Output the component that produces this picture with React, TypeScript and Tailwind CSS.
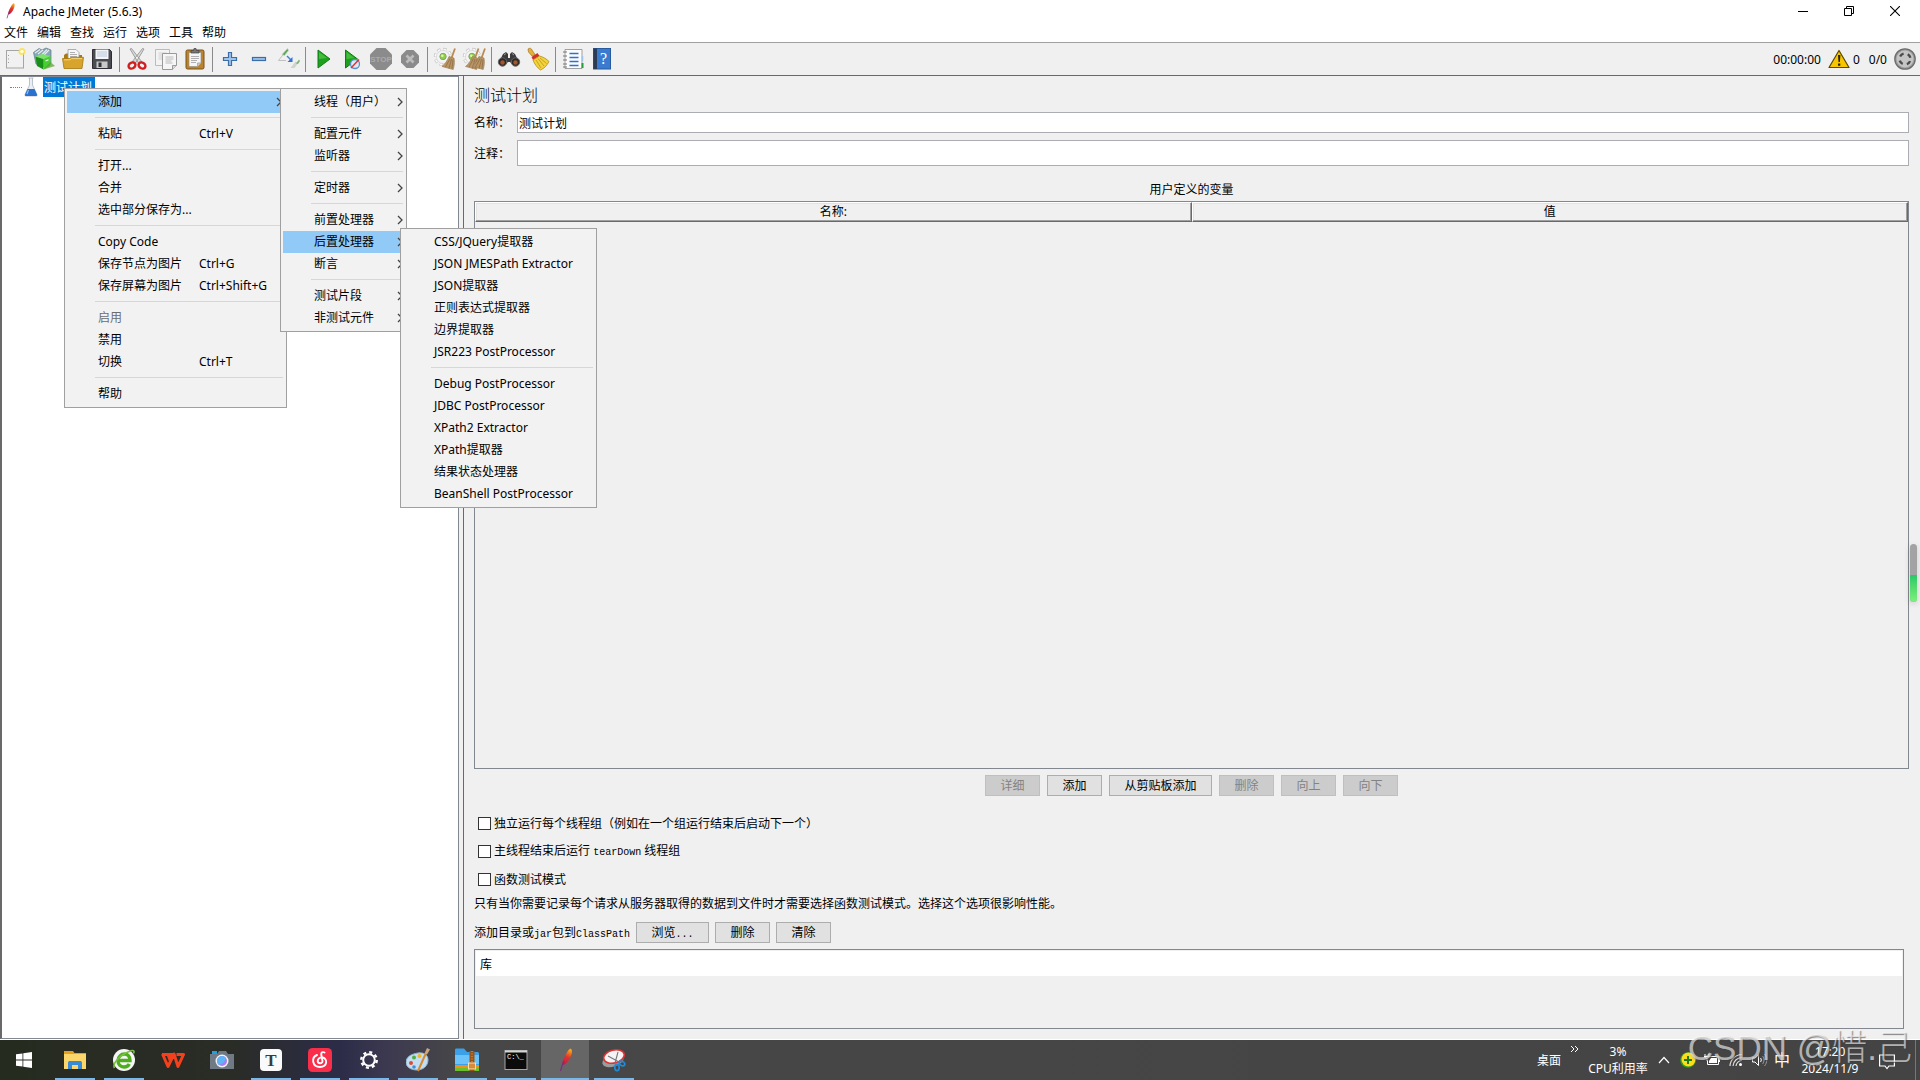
import React, { useState } from 'react';
import clsx from 'clsx';

interface MenuEntry {
  label?: string;
  shortcut?: string;
  disabled?: boolean;
  open?: boolean;
  submenu?: boolean;
  children?: MenuEntry[];
  separator?: boolean;
}

const SEP: MenuEntry = { separator: true };

const POST_PROCESSORS: MenuEntry[] = [
  { label: 'CSS/JQuery提取器' },
  { label: 'JSON JMESPath Extractor' },
  { label: 'JSON提取器' },
  { label: '正则表达式提取器' },
  { label: '边界提取器' },
  { label: 'JSR223 PostProcessor' },
  SEP,
  { label: 'Debug PostProcessor' },
  { label: 'JDBC PostProcessor' },
  { label: 'XPath2 Extractor' },
  { label: 'XPath提取器' },
  { label: '结果状态处理器' },
  { label: 'BeanShell PostProcessor' },
];

const ADD_MENU: MenuEntry[] = [
  { label: '线程（用户）', submenu: true },
  SEP,
  { label: '配置元件', submenu: true },
  { label: '监听器', submenu: true },
  SEP,
  { label: '定时器', submenu: true },
  SEP,
  { label: '前置处理器', submenu: true },
  { label: '后置处理器', submenu: true, open: true, children: POST_PROCESSORS },
  { label: '断言', submenu: true },
  SEP,
  { label: '测试片段', submenu: true },
  { label: '非测试元件', submenu: true },
];

const CONTEXT_MENU: MenuEntry[] = [
  { label: '添加', submenu: true, open: true, children: ADD_MENU },
  SEP,
  { label: '粘贴', shortcut: 'Ctrl+V' },
  SEP,
  { label: '打开...' },
  { label: '合并' },
  { label: '选中部分保存为...' },
  SEP,
  { label: 'Copy Code' },
  { label: '保存节点为图片', shortcut: 'Ctrl+G' },
  { label: '保存屏幕为图片', shortcut: 'Ctrl+Shift+G' },
  SEP,
  { label: '启用', disabled: true },
  { label: '禁用' },
  { label: '切换', shortcut: 'Ctrl+T' },
  SEP,
  { label: '帮助' },
];

const MENU_WIDTHS = ['w-[223px]', 'w-[127px]', 'w-[197px]'];
const MENU_OFFSETS = ['left-[21px] top-[11px]', 'left-[213px] -top-[3px]', 'left-[117px] -top-[3px]'];

function PopupMenu({ items, level }: { items: MenuEntry[]; level: number }) {
  return (
    <ul
      role="menu"
      className={clsx(
        'absolute z-20 border border-[#a0a0a0] bg-[#f2f2f2] p-[2px] text-black',
        MENU_WIDTHS[level],
        MENU_OFFSETS[level]
      )}
    >
      {items.map((item, i) =>
        item.separator ? (
          <li key={i} role="separator" className="flex h-[10px] items-start pt-1 pl-7">
            <span className="mr-px h-px w-full bg-[#d7d7d7]" />
          </li>
        ) : (
          <li key={i} role="none" className="relative">
            <button
              role="menuitem"
              disabled={item.disabled}
              className={clsx(
                'flex h-[22px] w-full items-center whitespace-nowrap pl-[31px] text-left',
                item.open && 'bg-[#91c9f7]',
                item.disabled && 'text-[#6d6d6d]'
              )}
            >
              <span className={clsx(level === 0 && 'w-[101px]')}>{item.label}</span>
              {item.shortcut && <span>{item.shortcut}</span>}
              {item.submenu && (
                <svg viewBox="0 0 6 10" className={clsx('ml-auto h-[10px] w-[6px]', level === 0 ? 'mr-[2px]' : 'mr-[1px]')}>
                  <path d="M1 1l4 4-4 4" fill="none" stroke="#444" strokeWidth="1.300" />
                </svg>
              )}
            </button>
            {item.children && <PopupMenu items={item.children} level={level + 1} />}
          </li>
        )
      )}
    </ul>
  );
}

/* ---------- toolbar icons ---------- */

function Icon({ children, size = 'h-6 w-6' }: { children: React.ReactNode; size?: string }) {
  return (
    <svg viewBox="0 0 24 24" className={size} fill="none">
      {children}
    </svg>
  );
}

const Feather = ({ size = 'h-6 w-6' }: { size?: string }) => (
  <Icon size={size}>
    <defs>
      <linearGradient id="feather" x1="16" y1="2" x2="8" y2="20" gradientUnits="userSpaceOnUse">
        <stop offset="0" stopColor="#f7a01c" />
        <stop offset=".35" stopColor="#e0352b" />
        <stop offset=".7" stopColor="#c2224c" />
        <stop offset="1" stopColor="#6d2a83" />
      </linearGradient>
    </defs>
    <path d="M17.500 .5c2.200 1 1.800 5.500-.5 9.500-1.800 3.300-3.800 6.500-7.500 7.500-.8-3.500 1-7 3-10.500 1.500-2.800 3-5.500 5-6.500z" fill="url(#feather)" />
    <path d="M11 13C9.500 16 8.500 19 7.500 23" stroke="#7b2a80" strokeWidth="1.100" />
  </Icon>
);

const Page = ({ x, y }: { x: number; y: number }) => (
  <g transform={`translate(${x} ${y})`}>
    <path d="M0 0h14v12l-4 4H0z" fill="#f6f6f6" stroke="#999" />
    <path d="M10 16v-4h4" fill="#ddd" stroke="#999" />
    <path d="M3 3.500h8M3 5.500h8M3 7.500h6M3 9.500h7" stroke="#b4b4b4" strokeWidth=".9" />
  </g>
);

const Gear = () => (
  <g>
    <circle cx="10" cy="10" r="7.500" stroke="#bdbdbd" strokeWidth="3.400" strokeDasharray="3.200 2.690" />
    <circle cx="10" cy="10" r="7.500" stroke="#f8f8f8" strokeWidth="2.200" strokeDasharray="2.600 3.290" strokeDashoffset="-.3" />
    <circle cx="10" cy="10" r="6.500" fill="#f4f4f4" stroke="#cfcfcf" strokeWidth=".6" />
    <circle cx="10" cy="9.500" r="3.200" fill="#8cd13f" stroke="#8e9d7c" />
    <circle cx="9.300" cy="8.800" r="1.300" fill="#d7f7ae" />
  </g>
);

const Broom = ({ x }: { x: number }) => (
  <g transform={`translate(${x} 0)`}>
    <path d="M14 1.500L10.500 11" stroke="#b98a52" strokeWidth="1.800" />
    <path d="M8 9.500l5 1.500c.8 4 .3 8-.8 11.500L1 19.500c3-2.500 5.200-5.500 7-10z" fill="#b99566" stroke="#9a7850" strokeWidth=".6" />
    <path d="M9 11.500L4.500 20M10.500 12L8 21.500M12 12.500l-1 9" stroke="#80603a" strokeWidth=".6" />
  </g>
);

const ICONS: Record<string, React.ReactNode> = {
  new: (
    <Icon>
      <rect x="3.500" y="3.500" width="17" height="17.500" fill="#f1f1f1" stroke="#a5a5a5" />
      <path d="M5.500 8v1M5.500 11.500v1M5.500 15v1" stroke="#999" />
      <circle cx="19" cy="4.500" r="3.500" fill="#fbe24a" opacity=".85" />
      <circle cx="19" cy="4.500" r="1.800" fill="#fffde0" />
    </Icon>
  ),
  templates: (
    <Icon>
      <path d="M1.500 5.500L7 1.500l3 1.500 4-2 5 2v13l-6 4-9-3z" fill="#8ba7b5" stroke="#5f7d8c" strokeWidth=".7" />
      <path d="M3 6l5-3.500M6 7l5-4M9.500 8l5.500-5.500M12 8l5-5" stroke="#e6eff3" strokeWidth="1.100" />
      <path d="M3.500 9.500l8 2.500v10.500L5 19z" fill="#189018" />
      <path d="M11.500 12l7-3v9.500l-7 4z" fill="#46cf30" />
      <path d="M3.500 9.500L10 7l8.500 2-7 3z" fill="#7be466" />
      <path d="M18.500 15l4.500 4-8 2.500-3.500 1z" fill="#55a02f" opacity=".7" />
      <path d="M13.500 14l3-1.200" stroke="#e7ffe0" strokeWidth="1.200" />
    </Icon>
  ),
  open: (
    <Icon>
      <path d="M3 20V8l2-1.500h4l1 1.500h11v12z" fill="#a97a12" />
      <path d="M7 13V2.500h8l3 3V13z" fill="#f7f7f7" stroke="#9b9b9b" strokeWidth=".8" />
      <path d="M9 5.500h5M9 7.500h7M9 9.500h7" stroke="#b0b0b0" />
      <path d="M1.500 11.500h7l1.500-1.200h12.500L21 21.500H3z" fill="#d9a42c" stroke="#a5770f" strokeWidth=".8" />
      <path d="M3 12.800h6l1.500-1.200h10.500" stroke="#f2d27a" />
    </Icon>
  ),
  save: (
    <Icon>
      <path d="M2.500 2.500h17l2 2v17h-19z" fill="#4b4b52" stroke="#2d2d33" />
      <rect x="5.500" y="2.500" width="13" height="9.500" fill="#f3f5f8" />
      <path d="M7 5h10M7 7h10M7 9h10" stroke="#a9bdd6" strokeWidth=".8" />
      <rect x="6.500" y="14.500" width="11" height="6.500" fill="#c9c9c9" />
      <rect x="8.500" y="15.500" width="3" height="4.500" fill="#33333a" />
    </Icon>
  ),
  cut: (
    <Icon>
      <path d="M5 2l1.500-.5L17 15l-3 2zM19 2l-1.500-.5L7 15l3 2z" fill="#d9d9d9" stroke="#8d8d8d" strokeWidth=".8" />
      <ellipse cx="7" cy="18.500" rx="3.600" ry="2.800" transform="rotate(-30 7 18.500)" stroke="#cf1f1f" strokeWidth="2.400" />
      <ellipse cx="17" cy="18.500" rx="3.600" ry="2.800" transform="rotate(30 17 18.500)" stroke="#cf1f1f" strokeWidth="2.400" />
    </Icon>
  ),
  copy: (
    <Icon>
      <g opacity=".6"><Page x={1.5} y={2.5} /></g>
      <Page x={8.5} y={6.5} />
    </Icon>
  ),
  paste: (
    <Icon>
      <rect x="3" y="3" width="18" height="19" rx="1.500" fill="#b9832f" stroke="#7c5214" />
      <path d="M6 5.500h12v10.500l-3.500 3.500H6z" fill="#f5f5f5" stroke="#8f8f8f" strokeWidth=".6" />
      <path d="M14.500 19.500V16H18" fill="#ccc" stroke="#999" strokeWidth=".7" />
      <path d="M8 9.500h8M8 11.500h8M8 13.500h6M8 15.500h5" stroke="#a8a8a8" strokeWidth=".9" />
      <path d="M8 6V3.500h2.500L11 1.500h2l.5 2H16V6z" fill="#777" stroke="#444" strokeWidth=".7" />
    </Icon>
  ),
  plus: (
    <Icon>
      <path d="M10.500 5.500h3v5h5v3h-5v5h-3v-5h-5v-3h5z" fill="#9fc3ea" stroke="#3a6ea8" strokeWidth="1.200" />
    </Icon>
  ),
  minus: (
    <Icon>
      <rect x="5.500" y="10.500" width="13" height="3" fill="#9fc3ea" stroke="#3a6ea8" strokeWidth="1.200" />
    </Icon>
  ),
  toggle: (
    <Icon>
      <path d="M8 6.500L2.500 13.500h7.500" stroke="#c0c0c0" />
      <path d="M6 7.500l5.500-6 1 2-4 5z" fill="#5da556" stroke="#c2d2c0" strokeWidth=".8" />
      <path d="M11 9l4 4" stroke="#3f7fd8" strokeWidth="1.500" />
      <path d="M16.500 10v5h-5z" fill="#2f72d4" />
      <path d="M14.500 21l5-6.500 3 1-4 5.500z" fill="#ccd6ca" />
      <path d="M20 16.500l3-4 1 1.500-2 3z" fill="#7db377" />
    </Icon>
  ),
  play: (
    <Icon>
      <path d="M7 3l12 9L7 21z" fill="#1ea01e" stroke="#0f7d14" />
      <path d="M8 5l8 6-8 1z" fill="#54c94a" opacity=".7" />
    </Icon>
  ),
  playNoPause: (
    <Icon>
      <path d="M5.500 3l12 9-12 9z" fill="#1ea01e" stroke="#0f7d14" />
      <path d="M6.500 5l8 6-8 1z" fill="#54c94a" opacity=".7" />
      <circle cx="15" cy="17" r="4.500" fill="#dfe9f5" stroke="#5f8fcb" strokeWidth="1.300" />
      <path d="M11 21l8-8.500" stroke="#d23838" strokeWidth="1.500" />
    </Icon>
  ),
  stop: (
    <Icon>
      <path d="M7.500 1h9L23 7.500v9L16.500 23h-9L1 16.500v-9z" fill="#8b8b8b" />
      <text x="12" y="15" textAnchor="middle" fontSize="8" fontWeight="bold" fill="#aaaaaa" fontFamily="Liberation Sans">STOP</text>
    </Icon>
  ),
  shutdown: (
    <Icon>
      <path d="M8.500 3h7L21 8.500v7L15.500 21h-7L3 15.500v-7z" fill="#8b8b8b" />
      <path d="M8.500 8.500l7 7M15.500 8.500l-7 7" stroke="#bcbcbc" strokeWidth="2.600" />
    </Icon>
  ),
  clear: (
    <Icon>
      <Gear />
      <Broom x={8} />
    </Icon>
  ),
  clearAll: (
    <Icon>
      <Gear />
      <Broom x={2.5} />
      <Broom x={9} />
    </Icon>
  ),
  search: (
    <Icon>
      <path d="M6 7l3-2 2 2v4h2V7l2-2 3 2 4.500 9-5.500 3-4-4h-2l-4 4-5.500-3z" fill="#3b3b3b" />
      <path d="M7 8l2-1.500M17 8l-2-1.500" stroke="#999" />
      <circle cx="5.500" cy="15" r="4.200" fill="#2a2a2a" stroke="#666" />
      <circle cx="18.500" cy="15" r="4.200" fill="#2a2a2a" stroke="#666" />
      <circle cx="5.500" cy="15.500" r="2.200" fill="#a5572a" />
      <circle cx="18.500" cy="15.500" r="2.200" fill="#a5572a" />
    </Icon>
  ),
  reset: (
    <Icon>
      <path d="M2 2c2-1.500 3.500-.5 4 1L9 7.500 6 9 2.500 5z" fill="#e2b13a" stroke="#a9761a" strokeWidth=".7" />
      <path d="M5.500 10l6-4 2 3-6.500 4z" fill="#d22f27" />
      <path d="M7 13l6.500-4c4 1 7 3 9.500 5.500-2 4-5 7-8.500 8.500-3.500-2.500-6-6-7.500-10z" fill="#f3d33c" stroke="#b48c14" strokeWidth=".8" />
      <path d="M10 13l5 8M12 11.500l6 7.500M14 11l6.500 5.500" stroke="#b48c14" strokeWidth=".7" />
    </Icon>
  ),
  list: (
    <Icon>
      <path d="M4 2.500h17v19H4z" fill="#fbfbfb" stroke="#8a8a8a" strokeWidth=".8" />
      <path d="M2 5h4M2 9h4M2 13h4M2 17h4M2 20h4" stroke="#777" strokeWidth="1.200" />
      <path d="M8.500 6.500h9M8.500 10.500h9M8.500 14.500h9M8.500 18.500h9" stroke="#2b72d6" strokeWidth="1.400" />
      <path d="M21.500 9v5" stroke="#9fc3ea" strokeWidth="1.500" />
      <path d="M21.500 16v5" stroke="#23a03a" strokeWidth="2" />
    </Icon>
  ),
  help: (
    <Icon>
      <rect x="3.500" y="1.500" width="17" height="20.500" fill="#3a7bd0" stroke="#285a9e" />
      <rect x="3.500" y="1.500" width="3.500" height="20.500" fill="#2b3d55" />
      <text x="13.500" y="17" textAnchor="middle" fontSize="16" fill="#fff" fontFamily="Liberation Serif">?</text>
    </Icon>
  ),
};

const TOOL_GROUPS: { id: string; title: string; disabled?: boolean }[][] = [
  [
    { id: 'new', title: '新建' },
    { id: 'templates', title: '模板' },
    { id: 'open', title: '打开' },
    { id: 'save', title: '保存' },
  ],
  [
    { id: 'cut', title: '剪切' },
    { id: 'copy', title: '复制' },
    { id: 'paste', title: '粘贴' },
  ],
  [
    { id: 'plus', title: '展开' },
    { id: 'minus', title: '折叠' },
    { id: 'toggle', title: '切换' },
  ],
  [
    { id: 'play', title: '启动' },
    { id: 'playNoPause', title: '不停顿开始' },
    { id: 'stop', title: '停止', disabled: true },
    { id: 'shutdown', title: '关闭', disabled: true },
  ],
  [
    { id: 'clear', title: '清除' },
    { id: 'clearAll', title: '清除全部' },
  ],
  [
    { id: 'search', title: '查找' },
    { id: 'reset', title: '重置查找' },
  ],
  [
    { id: 'list', title: '函数助手' },
    { id: 'help', title: '帮助' },
  ],
];

function TitleBar() {
  return (
    <div className="flex h-[22px] items-start pl-[2px]">
      <span className="flex h-[21px] w-[21px] items-center">
        <Feather size="h-4 w-4" />
      </span>
      <h1 className="flex h-6 items-center text-xs">Apache JMeter (5.6.3)</h1>
      <div className="ml-auto flex h-[21px] pr-[2px]">
        <button aria-label="最小化" className="flex w-[46px] items-center justify-center">
          <svg viewBox="0 0 10 10" className="h-[10px] w-[10px]"><path d="M0 5.500h10" stroke="#000" /></svg>
        </button>
        <button aria-label="还原" className="flex w-[46px] items-center justify-center">
          <svg viewBox="0 0 10 10" className="h-[10px] w-[10px]" fill="none" stroke="#000">
            <path d="M.5 2.500h7v7h-7zM2.500 2.500v-2h7v7h-2" />
          </svg>
        </button>
        <button aria-label="关闭" className="flex w-[46px] items-center justify-center">
          <svg viewBox="0 0 10 10" className="h-[10px] w-[10px]"><path d="M0 0l10 10M10 0L0 10" stroke="#000" strokeWidth="1.100" /></svg>
        </button>
      </div>
    </div>
  );
}

function Toolbar() {
  return (
    <div className="flex h-[34px] items-center border-t border-b border-t-[#a0a0a0] border-b-[#696969] bg-[#f0f0f0]">
      {TOOL_GROUPS.map((group, g) => (
        <React.Fragment key={g}>
          {g > 0 && (
            <span className="flex w-[6px] justify-center">
              <span className="h-[25px] w-px bg-[#8a8a8a]" />
            </span>
          )}
          {group.map((tool) => (
            <button key={tool.id} title={tool.title} disabled={tool.disabled} className="flex w-[29px] items-center justify-center">
              {ICONS[tool.id]}
            </button>
          ))}
        </React.Fragment>
      ))}
      <div className="ml-auto flex items-center pr-1 text-xs">
        <span className="pt-px">00:00:00</span>
        <button title="显示日志" className="ml-[7px] flex items-center gap-[3px]">
          <svg viewBox="0 0 22 20" className="h-5 w-[22px]">
            <path d="M11 1.500L21 18.500H1z" fill="#f7c600" stroke="#5a4700" strokeWidth="1.200" strokeLinejoin="round" />
            <path d="M10 6h2.400l-.5 7h-1.400zM10 14.500h2.300v2.200H10z" fill="#2b2200" />
          </svg>
          <span className="pt-px">0</span>
        </button>
        <span className="mr-[7px] ml-[9px] pt-px">0/0</span>
        <svg viewBox="0 0 22 22" className="h-[22px] w-[22px]" fill="none">
          <circle cx="11" cy="11" r="10.200" fill="#9c9c9c" stroke="#6c6c6c" strokeWidth="1.300" />
          <circle cx="11" cy="11" r="8.500" fill="#c4c4c4" />
          <circle cx="11" cy="11" r="5.500" stroke="#4a4a4a" strokeWidth="2.400" strokeDasharray="4.300 4.340" strokeDashoffset="-2.200" />
        </svg>
      </div>
    </div>
  );
}

function TreePanel() {
  return (
    <aside className="relative w-[459px] shrink-0 border-t border-r border-b border-l-2 border-[#828790] border-l-[#696969] bg-white">
      <div className="flex items-center pl-2">
        <span className="w-3 border-t border-dotted border-[#808080]" />
        <svg viewBox="0 0 16 20" className="ml-[1px] mr-[4px] h-5 w-4">
          <path d="M5.500 1h5M6.500 1v7L2 17.500c-.4 1 .3 1.500 1 1.500h10c.8 0 1.400-.6 1-1.500L9.500 8V1" fill="#e9eff5" stroke="#a9b5c0" strokeWidth=".8" />
          <path d="M4.500 12h7l2.500 5.500c.3 1-.3 1.500-1 1.500H3c-.8 0-1.300-.6-1-1.500z" fill="#2b72cf" />
          <path d="M5.500 13L4 17" stroke="#8dbcf5" strokeWidth="1.200" />
        </svg>
        <div className="relative h-5">
          <span className="block h-5 w-[52px] whitespace-nowrap bg-[#0078d7] pl-px leading-[22px] text-white">测试计划</span>
          <PopupMenu items={CONTEXT_MENU} level={0} />
        </div>
      </div>
    </aside>
  );
}

function PlainButton({ children, disabled, width = 'min-w-[55px]' }: { children: React.ReactNode; disabled?: boolean; width?: string }) {
  return (
    <button
      disabled={disabled}
      className={clsx(
        'h-[21px] border px-3 pt-px leading-[18px] whitespace-nowrap',
        width,
        disabled ? 'border-[#bfbfbf] bg-[#cccccc] text-[#838383]' : 'border-[#adadad] bg-[#e1e1e1]'
      )}
    >
      {children}
    </button>
  );
}

function Mono({ children }: { children: React.ReactNode }) {
  return <span className="font-['Liberation_Mono',monospace] text-[10px]">{children}</span>;
}

function Check({ children }: { children: React.ReactNode }) {
  const [checked, setChecked] = useState(false);
  return (
    <label className="flex h-7 items-center gap-[3px] pl-1">
      <input
        type="checkbox"
        checked={checked}
        onChange={(e) => setChecked(e.target.checked)}
        className="h-[13px] w-[13px] appearance-none border border-[#333] bg-white checked:bg-[#0078d7]"
      />
      <span className="pt-px">{children}</span>
    </label>
  );
}

const TH = 'h-5 border border-t-white border-l-white border-r-[#696969] border-b-[#696969] p-0 text-center font-normal leading-4 shadow-[inset_-1px_-1px_0_#a0a0a0,inset_1px_1px_0_#e3e3e3]';

function TestPlanPanel() {
  return (
    <main className="ml-1 flex min-w-0 grow flex-col border-l border-[#696969] pt-[7px] pr-[11px] pb-[10px] pl-[10px]">
      <h2 className="h-6 text-base leading-6 font-light">测试计划</h2>

      <div className="mt-[5px] flex items-center">
        <label htmlFor="plan-name" className="w-[43px] pt-px">名称：</label>
        <input id="plan-name" defaultValue="测试计划" className="h-[21px] min-w-0 grow border border-[#abadb3] bg-white px-px pt-px outline-none" />
      </div>
      <div className="mt-[7px] flex items-center">
        <label htmlFor="plan-comment" className="w-[43px] pt-px">注释：</label>
        <input id="plan-comment" className="h-[26px] min-w-0 grow border border-[#abadb3] bg-white px-px outline-none" />
      </div>

      <h3 className="mt-3 h-[23px] text-center leading-6">用户定义的变量</h3>
      <div className="min-h-40 grow border border-[#828790]">
        <table className="w-full table-fixed border-separate border-spacing-0">
          <thead>
            <tr>
              <th className={TH}>名称:</th>
              <th className={TH}>值</th>
            </tr>
          </thead>
        </table>
      </div>

      <div className="mt-[6px] flex justify-center gap-[7px]">
        <PlainButton disabled>详细</PlainButton>
        <PlainButton>添加</PlainButton>
        <PlainButton width="min-w-[103px]">从剪贴板添加</PlainButton>
        <PlainButton disabled>删除</PlainButton>
        <PlainButton disabled>向上</PlainButton>
        <PlainButton disabled>向下</PlainButton>
      </div>

      <div className="mt-[13px]">
        <Check>独立运行每个线程组（例如在一个组运行结束后启动下一个）</Check>
        <Check>
          主线程结束后运行 <Mono>tearDown</Mono> 线程组
        </Check>
        <Check>函数测试模式</Check>
      </div>
      <p className="h-5 leading-[22px]">只有当你需要记录每个请求从服务器取得的数据到文件时才需要选择函数测试模式。选择这个选项很影响性能。</p>

      <div className="mt-[9px] flex items-center gap-[6px]">
        <span className="pt-px">
          添加目录或<Mono>jar</Mono>包到<Mono>ClassPath</Mono>
        </span>
        <PlainButton width="min-w-[73px]">
          浏览<Mono>...</Mono>
        </PlainButton>
        <PlainButton>删除</PlainButton>
        <PlainButton>清除</PlainButton>
      </div>
      <div className="mt-[6px] mr-[5px] h-[80px] border border-[#828790] p-px">
        <div className="h-[25px] bg-white pl-1 leading-[28px]">库</div>
      </div>
    </main>
  );
}

/* ---------- taskbar ---------- */

interface TaskApp {
  name: string;
  running?: boolean;
  active?: boolean;
  icon: React.ReactNode;
}

const TASKS: TaskApp[] = [
  {
    name: '文件资源管理器',
    running: true,
    icon: (
      <Icon>
        <path d="M1 3h9l1.500 2H23v4H1z" fill="#e3a21a" />
        <path d="M1 6h22v15H1z" fill="#fbd76b" />
        <path d="M5 21v-6c0-1.500.8-2 2-2h10c1.200 0 2 .5 2 2v6h-4v-4H9v4z" fill="#3a8bd6" />
      </Icon>
    ),
  },
  {
    name: '浏览器',
    running: true,
    icon: (
      <Icon>
        <circle cx="12" cy="12" r="11" fill="#f5f5f5" />
        <path d="M6.500 12.500h11.500c0-4.500-2.500-6.500-5.500-6.500-3.500 0-6.500 2.800-6.500 6.500s2.500 6.500 6 6.500c2.500 0 4.300-1 5.300-3" stroke="#4fae1e" strokeWidth="3.400" />
        <path d="M2.500 20C0 16 8 6 20 2.500c2-.3 2.500 1 1.500 3" stroke="#7bc143" strokeWidth="1.600" />
      </Icon>
    ),
  },
  {
    name: 'WPS Office',
    icon: (
      <Icon>
        <path d="M1 6.500h10.500L9 12 7 6.500M1.500 6l5.500 12.500L13 6l4 12.500L22.500 6.500h-7" stroke="#f5401d" strokeWidth="3" strokeLinejoin="round" />
      </Icon>
    ),
  },
  {
    name: '相机',
    icon: (
      <Icon>
        <path d="M2 3h5v3H2z" fill="#1ea0e6" />
        <path d="M7 6l2-3h7l2 3h6v15H0V6z" fill="#707a85" />
        <circle cx="12" cy="13" r="6.500" fill="#f2f2f2" />
        <circle cx="12" cy="13" r="5" fill="#a77cf0" />
        <path d="M8 10a5 5 0 018 0c-1 4-4 6-7 7a5 5 0 01-1-7z" fill="#5fb5f5" />
      </Icon>
    ),
  },
  {
    name: 'Typora',
    running: true,
    icon: (
      <Icon>
        <rect x="1" y="1" width="22" height="22" rx="4" fill="#fafafa" />
        <text x="12" y="17.500" textAnchor="middle" fontSize="17" fontWeight="bold" fill="#3b3b3b" fontFamily="Liberation Serif">T</text>
      </Icon>
    ),
  },
  {
    name: '网易云音乐',
    running: true,
    icon: (
      <Icon>
        <rect width="24" height="24" rx="4.500" fill="#f92e4b" />
        <path d="M16.500 4.500c-2-1-3.500 0-3.300 1.800L14.500 13c.3 2.800-4.500 3.200-4.800.2-.2-2.500 2.500-4.200 5-3.700 5 1.200 5 9.500-2.700 9.500-8 0-9-9.500-3-12" stroke="#fff" strokeWidth="1.900" strokeLinecap="round" />
      </Icon>
    ),
  },
  {
    name: '设置',
    running: true,
    icon: (
      <Icon>
        <circle cx="12" cy="12" r="7.700" stroke="#fff" strokeWidth="2.500" strokeDasharray="3.024 3.024" />
        <circle cx="12" cy="12" r="5.800" stroke="#fff" strokeWidth="2" />
      </Icon>
    ),
  },
  {
    name: '画图',
    running: true,
    icon: (
      <Icon>
        <path d="M12 5c7-1 10 3 10 7 0 6-5 10-11 10S0 19 0 14.500C0 9 5 6 12 5z" fill="#c3def0" stroke="#8cb3cf" />
        <circle cx="5" cy="15" r="2" fill="#e04a38" />
        <circle cx="8" cy="9.500" r="2" fill="#4fae42" />
        <circle cx="13.500" cy="8" r="2" fill="#f2b51d" />
        <circle cx="8" cy="19" r="1.800" fill="#3c8fd8" />
        <path d="M20 5l-8 18" stroke="#d48a33" strokeWidth="2" />
        <path d="M18.500 5.500L21 0l3 1.500-3 5z" fill="#c9a67c" />
      </Icon>
    ),
  },
  {
    name: '压缩工具',
    running: true,
    icon: (
      <Icon>
        <path d="M0 2c0-1 .5-1.500 1.500-1.500H9L12 4h11l1 1v17.500H0z" fill="#3ba0ea" />
        <path d="M0 7h24v9H0z" fill="#6cc3fa" />
        <path d="M0 17h24v3H0z" fill="#f39019" />
        <path d="M0 20h24v3H0z" fill="#6cc02c" />
        <path d="M14.500 3h5v20h-5z" fill="#9a5418" />
        <rect x="13.500" y="15" width="7" height="6" fill="#d78b3c" stroke="#fbe0b0" />
        <path d="M17 3v12" stroke="#d9a566" strokeDasharray="1 1.500" />
      </Icon>
    ),
  },
  {
    name: '命令提示符',
    running: true,
    icon: (
      <Icon>
        <rect x="1" y="2.500" width="22" height="19" fill="#0b0b0b" stroke="#a5a5a5" />
        <path d="M1 3.500h22" stroke="#d5d5d5" strokeWidth="2" />
        <text x="3" y="11" fontSize="7" fill="#fff" fontFamily="Liberation Mono">C:\_</text>
      </Icon>
    ),
  },
  { name: 'Apache JMeter', running: true, active: true, icon: <Feather /> },
  {
    name: '截图工具',
    running: true,
    icon: (
      <Icon>
        <ellipse cx="11" cy="12.500" rx="11" ry="6" transform="rotate(-18 11 12.500)" fill="#9c9c9c" />
        <ellipse cx="12" cy="8.500" rx="10.500" ry="6.500" transform="rotate(-14 12 8.500)" fill="#f5f5f5" stroke="#d33" strokeWidth="1.600" />
        <path d="M6 8l11 6M16 4l-3 11" stroke="#777" strokeWidth="1.100" />
        <ellipse cx="15" cy="19.500" rx="2.200" ry="3.200" stroke="#1f8ad8" strokeWidth="1.700" />
        <ellipse cx="20" cy="15.500" rx="3" ry="2" transform="rotate(30 20 15.500)" stroke="#1f8ad8" strokeWidth="1.700" />
      </Icon>
    ),
  },
];

function Taskbar() {
  return (
    <footer className="relative flex h-10 shrink-0 bg-[linear-gradient(90deg,#262b20_0px,#2a2c26_230px,#2c2c48_340px,#3d3a50_390px,#474747_460px,#444444_100%)] text-white">
      <button aria-label="开始" className="mr-[3px] flex w-12 items-center justify-center">
        <svg viewBox="0 0 16 16" className="h-4 w-4" fill="#fff">
          <path d="M0 2.300L6.500 1.400v6.200H0zM7.300 1.300L16 0v7.600H7.300zM0 8.400h6.500v6.200L0 13.700zM7.300 8.400H16V16l-8.700-1.300z" />
        </svg>
      </button>
      {TASKS.map((task) => (
        <button
          key={task.name}
          title={task.name}
          className={clsx('relative mr-px flex w-12 items-center justify-center', task.active && 'bg-[#666666]')}
        >
          {task.icon}
          {task.running && (
            <span className={clsx('absolute bottom-0 h-[2px] bg-[#76b9ed]', task.active ? 'inset-x-0' : 'inset-x-1')} />
          )}
        </button>
      ))}

      <div className="ml-auto flex items-center text-xs leading-[17px]">
        <span className="w-[34px] text-center">桌面</span>
        <button aria-label="更多" className="flex w-4 justify-center self-start pt-[6px]">
          <svg viewBox="0 0 9 6" className="h-[6px] w-[9px]" fill="none" stroke="#fff"><path d="M1 0l3 3-3 3M5 0l3 3-3 3" /></svg>
        </button>
        <div className="w-[72px] text-center">
          <div>3%</div>
          <div>CPU利用率</div>
        </div>
        <button aria-label="显示隐藏的图标" className="flex w-5 justify-center">
          <svg viewBox="0 0 12 8" className="h-2 w-3" fill="none" stroke="#fff" strokeWidth="1.200"><path d="M1 7l5-5.500L11 7" /></svg>
        </button>
        <span className="flex w-7 justify-center">
          <svg viewBox="0 0 16 16" className="h-4 w-4">
            <circle cx="8" cy="8" r="7.800" fill="#2f9d27" />
            <circle cx="8.500" cy="7.500" r="7" fill="#fddc1c" />
            <path d="M8 4v8M4 8h8" stroke="#1c7d1c" strokeWidth="2" />
          </svg>
        </span>
        <span className="flex w-5 justify-center">
          <svg viewBox="0 0 16 14" className="h-[14px] w-4" fill="none" stroke="#fff">
            <path d="M5.500 3.500h9v8h-11v-4M15.500 6v3" />
            <path d="M7 5h6v5H5V8z" fill="#fff" stroke="none" />
            <path d="M1 1v3c0 2 4 2 4 0V1M3 5.500V8M0 3.500h6" />
          </svg>
        </span>
        <span className="flex w-7 justify-center">
          <svg viewBox="0 0 14 14" className="h-[14px] w-[14px]" fill="none" stroke="#ddd" strokeWidth="1.200">
            <path d="M1 13A12 12 0 0113 1.500M4 13a9 9 0 019-8.500M7 13a6 6 0 016-5.500" />
            <circle cx="11.500" cy="11.500" r="1.500" fill="#fff" stroke="none" />
          </svg>
        </span>
        <span className="flex w-5 justify-center">
          <svg viewBox="0 0 16 14" className="h-[14px] w-4" fill="none" stroke="#fff">
            <path d="M.5 5h2.500L6.500 1.500v11L3 9H.5zM8.500 5c1 1.200 1 2.800 0 4" />
            <path d="M10.500 3c2 2.200 2 5.800 0 8M12.500 1c3 3.500 3 8.500 0 12" stroke="#999" />
          </svg>
        </span>
        <span className="w-6 text-center text-base">中</span>
        <div className="w-[72px] text-center">
          <div>17:20</div>
          <div>2024/11/9</div>
        </div>
        <button aria-label="通知" className="flex w-[42px] justify-center pt-1">
          <svg viewBox="0 0 16 16" className="h-4 w-4" fill="none" stroke="#fff" strokeWidth="1.200">
            <path d="M.6 1h14.800v11H10l-2 2.500L6 12H.6z" />
          </svg>
        </button>
        <span className="mr-1 ml-[7px] h-10 w-px bg-[#777]" />
      </div>

      <div className="pointer-events-none absolute right-[8px] bottom-[12px] text-[35px] font-light leading-10 whitespace-nowrap text-white/60 [text-shadow:1px_1px_1px_rgba(60,60,60,0.6)] font-['Liberation_Sans','Noto_Sans_CJK_SC',sans-serif]">
        CSDN @惜.己
      </div>
    </footer>
  );
}

const MENU_BAR = ['文件', '编辑', '查找', '运行', '选项', '工具', '帮助'];

export default function App() {
  return (
    <div className="relative flex min-h-screen flex-col bg-white font-['Noto_Sans','Noto_Sans_CJK_SC',sans-serif] text-xs text-black">
      <TitleBar />
      <nav className="flex h-5 items-center gap-[9px] pl-1">
        {MENU_BAR.map((label) => (
          <button key={label} className="pt-[2px] leading-5">{label}</button>
        ))}
      </nav>
      <Toolbar />
      <div className="mb-px flex grow bg-[#f0f0f0]">
        <TreePanel />
        <TestPlanPanel />
      </div>
      <Taskbar />

      {/* floating memory gauge on the right edge */}
      <div className="absolute top-[544px] right-[3px] flex h-[58px] w-[7px] flex-col overflow-hidden rounded-full bg-[#a3a3a3] shadow-[0_2px_6px_rgba(0,0,0,0.15)]">
        <span className="mt-auto h-[27px] bg-linear-to-b from-[#25c867] to-[#7cf07c]" />
      </div>
    </div>
  );
}
